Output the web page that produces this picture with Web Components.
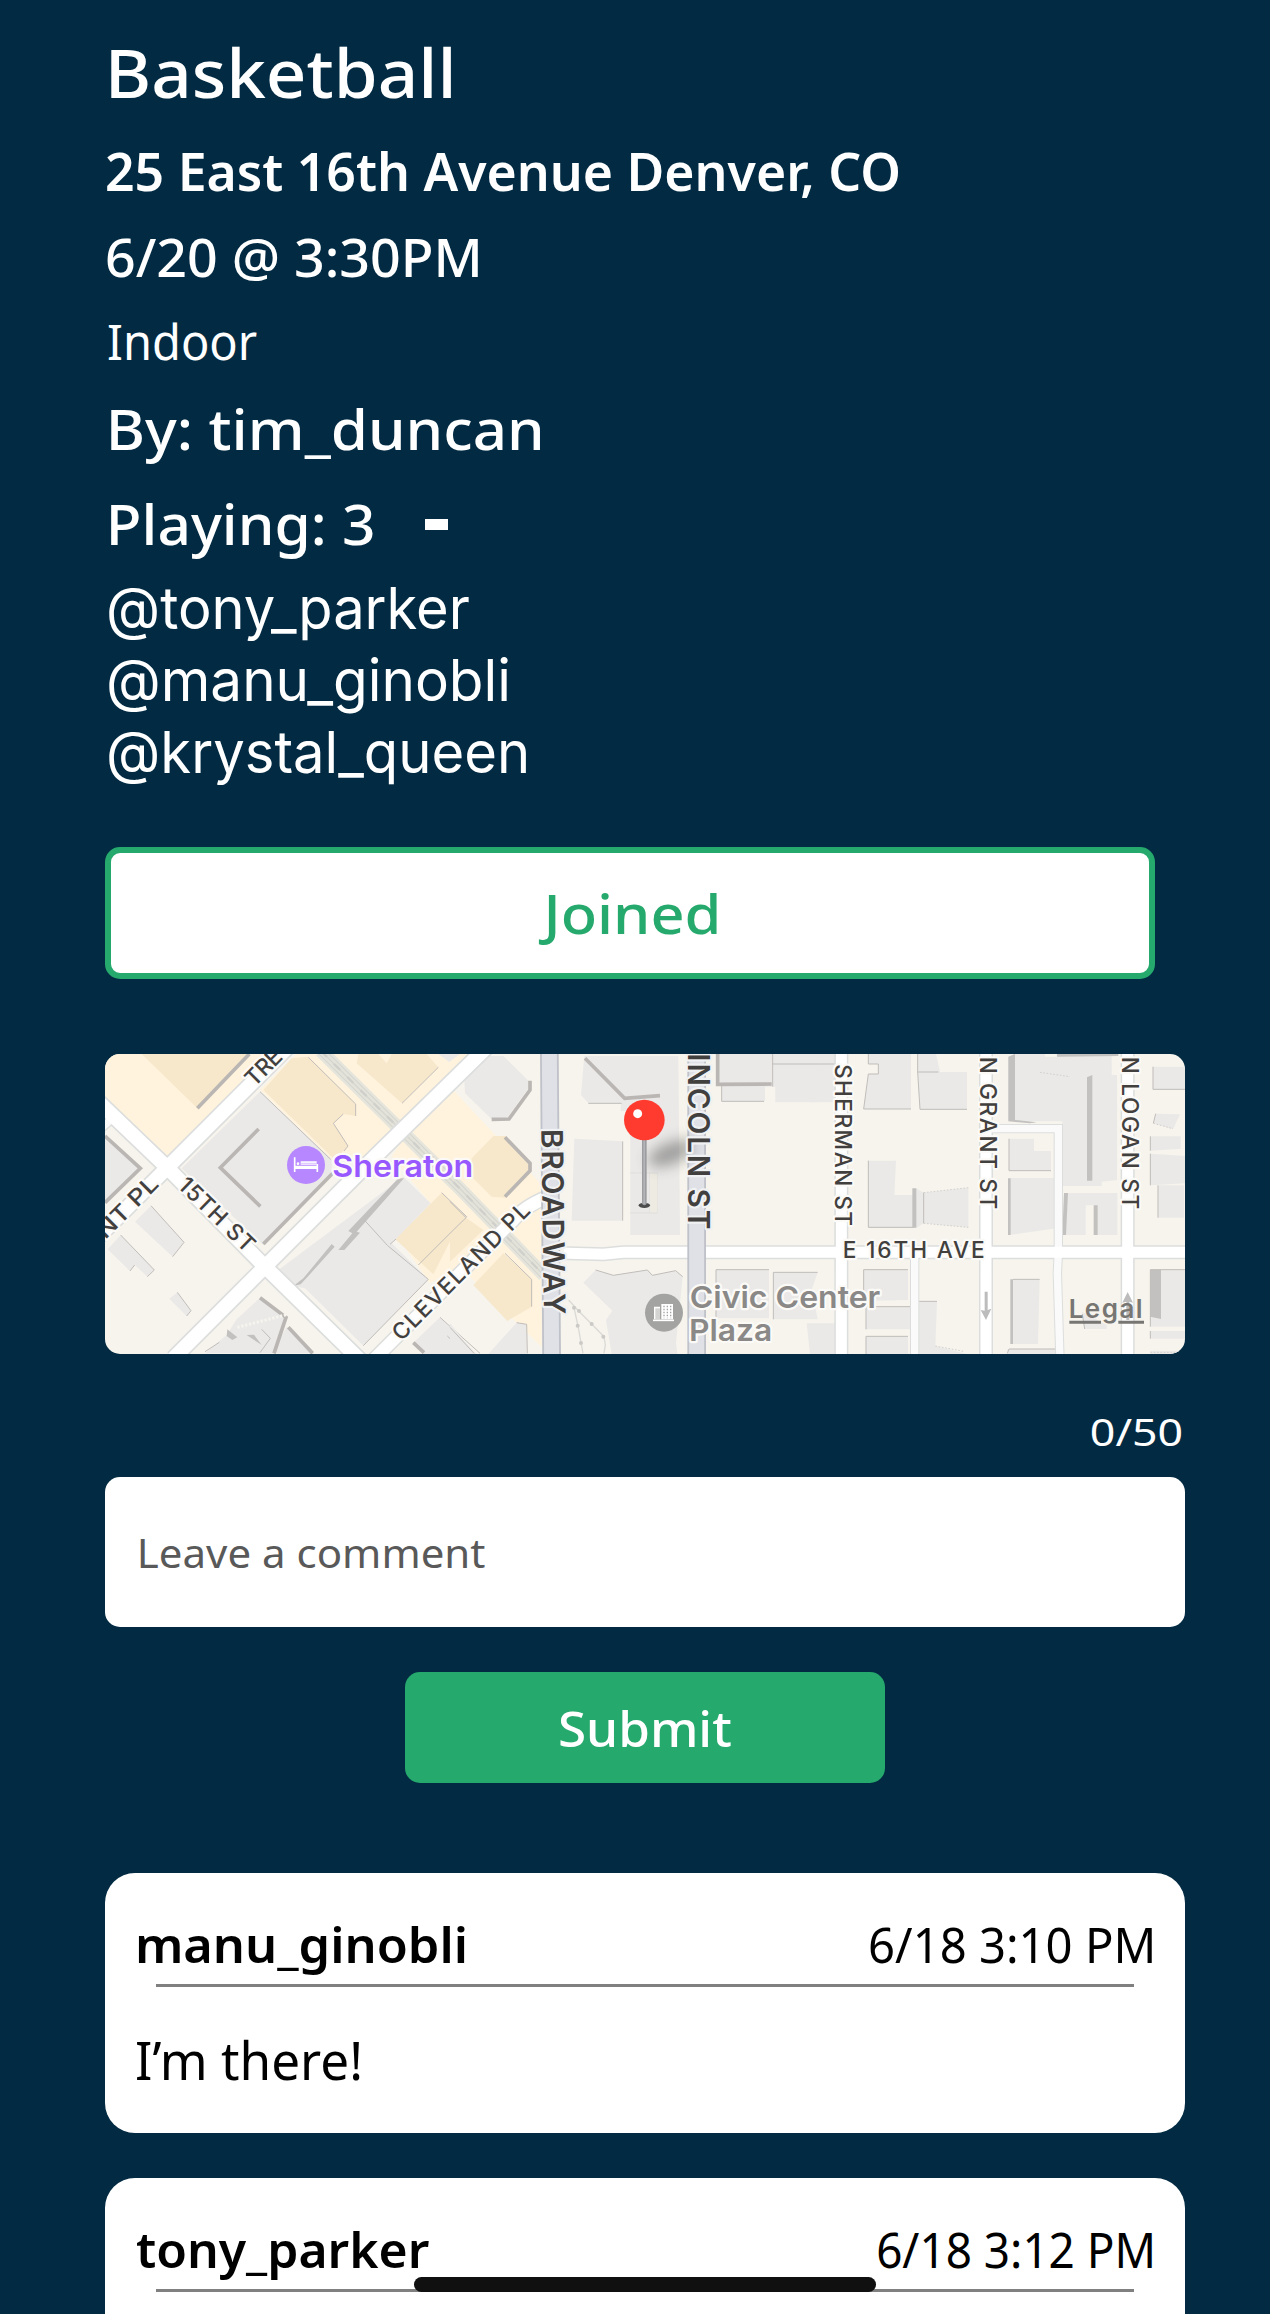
<!DOCTYPE html>
<html lang="en">
<head>
<meta charset="utf-8">
<title>Basketball</title>
<style>
  html, body { margin: 0; background: #022b43; }
  body { height: 2314px; overflow: hidden; }
</style>
</head>
<body>
<event-page></event-page>

<script>
const UI = '"Noto Sans", "Open Sans", sans-serif';
const SYS = 'Inter, "Liberation Sans", sans-serif';
const ctx = document.createElement('canvas').getContext('2d');

/* One line of text whose visible ink spans `w` px (moved by `dx`), with its baseline at `base`. */
class TypeLine extends HTMLElement {
  connectedCallback() {
    const n = k => parseFloat(this.getAttribute(k)) || 0;
    const size = n('size'), weight = this.getAttribute('weight') || 400;
    const family = this.getAttribute('face') === 'system' ? SYS : UI;
    const root = this.attachShadow({ mode: 'open' });
    ctx.font = `${weight} ${size}px ${family}`;
    const m = ctx.measureText(this.textContent.trim());
    const ink = m.actualBoundingBoxLeft + m.actualBoundingBoxRight;
    const k = n('w') / ink;
    const a = m.fontBoundingBoxAscent, d = m.fontBoundingBoxDescent;
    const top = n('base') - ((size - a - d) / 2 + a);
    root.innerHTML = `<style>
      :host { display: block; flex: none; width: ${n('w')}px; height: ${n('h')}px; }
      span { display: block; width: max-content; white-space: pre; font: ${weight} ${size}px/1 ${family};
        transform-origin: 0 0;
        transform: translate(${m.actualBoundingBoxLeft * k + n('dx')}px, ${top}px) scaleX(${k}); }
    </style><span><slot></slot></span>`;
  }
}

class EventHeader extends HTMLElement {
  connectedCallback() {
    this.attachShadow({ mode: 'open' }).innerHTML = `<style>
      :host { display: flex; flex-direction: column; padding-left: 3px; color: #fff; height: 847px; box-sizing: border-box; }
      .row { display: flex; gap: 55px; }
      .pull { margin-left: -1px; }
      i { width: 23px; height: 11px; margin-top: 54px; background: #fff; }
    </style>
    <type-line w="340" dx="3" h="130" base="98" size="68" weight="500">Basketball</type-line>
    <type-line class="pull" w="791" h="85" base="61" size="52" weight="600">25 East 16th Avenue Denver, CO</type-line>
    <type-line class="pull" w="371" h="90" base="62" size="52" weight="500">6/20 @ 3:30PM</type-line>
    <type-line w="149" h="85" base="55" size="49" weight="400">Indoor</type-line>
    <type-line w="430" dx="3" h="75" base="61" size="56.5" weight="500">By: tim_duncan</type-line>
    <div class="row">
      <type-line w="262" dx="3" h="107" base="81" size="56.5" weight="500">Playing: 3</type-line><i></i>
    </div>
    <type-line w="360" dx="1" h="72" base="56.7" size="58" face="system">@tony_parker</type-line>
    <type-line w="399" dx="1" h="72" base="56.7" size="58" face="system">@manu_ginobli</type-line>
    <type-line w="417" dx="1" h="72" base="56.7" size="58" face="system">@krystal_queen</type-line>`;
  }
}

class ActionButton extends HTMLElement {
  connectedCallback() {
    this.attachShadow({ mode: 'open' }).innerHTML = `<style>
      :host { display: flex; justify-content: center; box-sizing: border-box; border-radius: 15px;
        background: #26a96c; color: #fff; width: 480px; height: 111px; }
      :host([joined]) { width: 1050px; height: 132px; border: 6px solid #26a96c; background: #fff; color: #26a96c; }
    </style><slot></slot>`;
  }
}

class CommentField extends HTMLElement {
  connectedCallback() {
    this.attachShadow({ mode: 'open' }).innerHTML = `<style>
      :host { display: block; }
      .count { display: flex; justify-content: flex-end; padding-right: 3px; color: #fff; height: 123px; }
      .box { height: 150px; border-radius: 15px; background: #fff; color: #595959; padding-left: 34px; box-sizing: border-box; }
    </style>
    <div class="count"><type-line w="91" h="123" base="92" size="38.5" weight="400">0/50</type-line></div>
    <div class="box"><type-line w="345" dx="1" h="150" base="91" size="40" weight="400">Leave a comment</type-line></div>`;
  }
}

class CommentCard extends HTMLElement {
  connectedCallback() {
    this.attachShadow({ mode: 'open' }).innerHTML = `<style>
      :host { display: flex; flex-direction: column; height: 260px; border-radius: 30px; background: #fff; color: #000;
        padding: 0 33px 0 31.5px; box-sizing: border-box; }
      .top { display: flex; justify-content: space-between; height: 111px; }
      hr { flex: none; height: 3px; border: 0; margin: 0 18px 0 19.5px; background: #808080; }
    </style>
    <div class="top"><slot name="who"></slot><slot name="when"></slot></div><hr><slot></slot>`;
  }
}

class HomeBar extends HTMLElement {
  connectedCallback() {
    this.attachShadow({ mode: 'open' }).innerHTML = `<style>
      :host { position: absolute; left: 414px; top: 2277px; width: 462px; height: 15px; border-radius: 7.5px; background: #101010; }
    </style>`;
  }
}

class VenueMap extends HTMLElement {
  connectedCallback() {
    this.attachShadow({ mode: 'open' }).innerHTML = `<style>
      :host { display: block; width: 1080px; height: 300px; border-radius: 15px; overflow: hidden; background: #f6f4ec; }
      svg { display: block; }
      .zone { fill: #fff3dd; } .shop { fill: #f7e8cc; } .bld { fill: #eae9e8; }
      .edge { fill: none; stroke: #bab6b3; stroke-width: 11; }
      .thin { fill: none; stroke: #c0bdba; stroke-width: 3; }
      .solid { fill: #c3c1bf; }
      .case { fill: none; stroke: #dcdedd; } .road { fill: none; stroke: #fff; }
      text { font-family: ${SYS}; fill: #42403e; stroke: #fbfaf7; stroke-width: 13; stroke-linejoin: round; paint-order: stroke; }
      .st { font-size: 68px; font-weight: 450; }
      .major { font-size: 89px; font-weight: 600; stroke: #f0f1f2; }
      .poi { font-size: 91px; font-weight: 600; }
    </style>
    <svg width="1080" height="300" viewBox="45 42 3240 900">
      <defs><filter id="soft" x="-60%" y="-100%" width="220%" height="300%"><feGaussianBlur stdDeviation="20"/></filter></defs>
      <!-- commercial zones -->
      <path class="zone" d="M45 42H565L232 365L45 180ZM510 150L620 42H1150L840 345L730 365ZM955 270L1085 145L1355 435V920L1240 810L1110 680L1020 730L930 600L1020 490L905 350Z"/>
      <!-- western blocks -->
      <path class="shop" d="M155 42H480L322 205ZM605 55L655 50L797 192V228L760 222L730 250L774 318L735 360L520 150ZM805 42H865L890 70L905 42H1010L1045 82L936 190L800 70ZM1055 458L1130 530L1105 555L1030 703L915 597Z"/>
      <path class="bld" d="M510 155L725 358V400L520 615L275 385ZM45 290L153 385L45 490ZM183 497L282 607L248 650L135 545ZM92 585L193 690L172 710L135 675L120 693L53 628ZM262 757L303 812L290 828L238 776ZM940 410L1022 490L905 610L1015 718L820 917L645 745L610 738L565 690ZM440 838L510 773L590 830L560 940H345L410 885ZM590 860L668 940H548ZM970 908L1050 832L1160 942H1000ZM1045 42H1110L1078 66Z"/>
      <path class="edge" d="M478 42L322 205M506 267L391 383L511 499M45 288L151 385L45 488M728 400L520 612M510 773L588 832L552 940M595 862L668 940M970 908L1002 938"/>
      <path class="solid" d="M925 415L942 415L800 575L810 578L763 630L745 630L787 580L775 573ZM725 612L734 620L655 708L632 733L610 738L640 715ZM412 868L442 892L427 900L410 888ZM470 885L492 884L515 915Z"/>
      <path class="thin" d="M510 155L722 358M655 52L797 192V228M760 222L730 250L774 318L762 333M1045 82L936 190M183 497L282 607L248 650M92 585L193 690L172 710M120 693L134 675M262 757L303 812L290 828M823 540L893 617L1015 718L820 917M900 613L918 597M1055 458L1130 530L985 675M1050 832L1170 940M515 868L541 895L510 938M345 935L388 907M1072 888L1110 925"/>
      <path d="M442 862L590 824" stroke="#f6f4ec" stroke-width="9" stroke-dasharray="7 5" fill="none"/>
      <!-- central blocks -->
      <g transform="translate(1080 0)">
        <path class="bld" d="M62 62L110 48L160 48L235 122V145L172 232L125 238L45 160L43 115ZM403 48H685L690 585H541V213L512 213L513 190L415 190L393 165ZM373 296L518 304V542H365ZM803 42H1160V187H976V140H945V184H815V138H803ZM437 690L490 706L592 690L607 706L677 692L698 710L678 910L682 942H485L468 840L487 812L400 728ZM798 689H957V835H798ZM970 697H1103L1085 750L1103 838H970ZM1070 850H1192V942H1080ZM200 848L230 853V942H115ZM0 850L75 942H0Z"/>
        <path class="shop" d="M130 288H168L245 370V392L165 473L125 470L60 405L65 355ZM160 640L245 718V800L172 843L70 735ZM0 485L48 533L100 570L0 665Z"/>
        <path class="edge" d="M240 122V150L177 237L125 238M405 55L524 175L630 167M165 292L240 370V392L165 470M803 42V133L965 132"/>
        <path class="thin" d="M0 485L48 533L0 580M518 304V542M165 640L245 718V800M437 690L490 706L592 690L607 706L677 692L698 710M415 190H515M815 138V184H942M970 697V838M970 697H1103M798 689H957M798 689V835M968 42V72H1190M968 140V70M200 848L230 853L232 940M0 862L72 940"/>
        <path d="M541 399H622V519H541M600 399V519" fill="none" stroke="#dedcd8" stroke-width="2.5"/><path d="M600 401h22v116h-22z" fill="#eeece2"/>
        <path d="M356 780L385 812L425 852L462 890L466 915L462 940M372 803L384 858L393 908L399 940" fill="none" stroke="#dbdad6" stroke-width="4"/>
        <g fill="#cbcac7"><circle cx="372" cy="803" r="6"/><circle cx="387" cy="813" r="6"/><circle cx="425" cy="852" r="6"/><circle cx="383" cy="857" r="6"/><circle cx="460" cy="890" r="6"/><circle cx="393" cy="909" r="6"/></g>
      </g>
      <!-- eastern blocks -->
      <g transform="translate(2160 0)">
        <path class="bld" d="M0 42H28V187H0ZM175 42H303V207H161L175 102H205V72H175ZM323 42H378L390 96H471V208H330L323 96ZM175 362H258L253 465H310L318 445L341 458L475 443V562L341 550L320 563H175ZM595 50L615 42H705V50H740V42H905V105H921V420L875 425V438H757V244H595ZM597 296H672V333H723V392H597ZM597 414H740V565L597 585ZM762 459H922V585H852V496H827V585H757ZM1029 80H1140V148H1029ZM1037 221L1110 223L1089 268L1030 250ZM1021 289H1112V326L1021 332ZM1021 341L1125 348V430L1021 436ZM1044 436H1122V533H1044ZM161 689H294V780L161 782ZM168 800H311V868H168ZM168 889H294V942H168ZM323 784H381L376 918L470 942H323ZM602 718H689L684 912H602ZM592 927H745V942H592ZM1021 689H1140V860H1021ZM1021 873H1140V896H1021ZM1021 932H1140V942H1021ZM815 815L890 855V867H824Z"/>
        <path class="solid" d="M595 50L615 42V240L680 247L660 250L595 244ZM741 42H925V48L741 50ZM831 112L847 105V422H831ZM307 445H319V563H307ZM594 415H602V585H594ZM762 459H774L768 585H757ZM851 496H863V585H851ZM601 718H609V912H601ZM1021 689H1053V837L1021 830Z"/>
        <path class="thin" d="M0 72H28M175 42V72H205V102H175L161 207H303M323 42V96L330 208H471M323 96H385M175 362V562H310M341 458V550M597 296V392H723M1029 80V148H1140M1037 221L1030 250M1021 289V332M1021 341V436M1044 436V533M161 782V689H294M168 868V800H311M168 942V889H294M323 942V784H381M609 718H689M592 940L597 927H740M1021 689H1140M1021 860V689M1021 873V896M817 822L824 867"/>
        <path d="M341 458L475 443M341 550L475 562M690 97L780 110M376 918L460 934M1021 937H1120M1030 250L1089 266" fill="none" stroke="#d2d0cd" stroke-width="3" stroke-dasharray="5 5"/>
      </g>
      <!-- light rail -->
      <g fill="none"><path d="M692 32L1110 446L1362 706" stroke="#e6e5dc" stroke-width="40"/><path d="M692 32L1110 446L1362 706" stroke="#d4d5cf" stroke-width="25"/><path d="M692 32L1110 446L1362 706" stroke="#e4e3da" stroke-width="19"/><path d="M692 32L1110 446L1362 706" stroke="#d6d6d0" stroke-width="4"/><path d="M692 32L1110 446L1362 706" stroke="#cfd0cb" stroke-width="7" stroke-dasharray="26 30"/></g>
      <!-- streets -->
      <g class="case">
        <path stroke-width="52" d="M25 185L232 383L525 680L815 965M232 383L610 5M232 383L20 595M525 680L860 345L1190 22M525 680L250 955"/>
        <path stroke-width="46" d="M845 965L1270 540Q1300 500 1375 470"/>
        <path stroke-width="42" d="M1420 640H1435L1540 643L1600 637H3300M2254 30V960M2688 30V960M3113 30V960"/>
        <path stroke-width="28" d="M2700 266H2905V640L2902 700L2910 960M2474 640V960"/>
        <path stroke-width="30" d="M30 268L75 228"/>
      </g>
      <g class="road">
        <path stroke-width="22" stroke="#fafafa" d="M2700 266H2905V640L2902 700L2910 960M2474 640V960M30 268L75 228"/>
        <path stroke-width="42" d="M25 185L232 383L525 680L815 965M232 383L610 5M232 383L20 595M525 680L860 345L1190 22M525 680L250 955"/>
        <path stroke-width="37" d="M845 965L1270 540Q1300 500 1375 470"/>
        <path stroke-width="33" d="M1420 640H1435L1540 643L1600 637H3300M2254 30V960M2688 30V960M3113 30V960"/>
      </g>
      <path d="M1378 30L1385 960M1820 30V960" fill="none" stroke="#c0c2c9" stroke-width="56"/>
      <path d="M1378 30L1385 960M1820 30V960" fill="none" stroke="#e0e1e7" stroke-width="45"/>
      <!-- one-way arrows -->
      <g fill="#bcbcbc"><path d="M2684 755H2693V810L2704 806L2688 840L2672 810L2684 812ZM3109 840H3118V785L3129 788L3113 756L3097 788L3109 785Z"/></g>
      <!-- pin shadow -->
      <ellipse cx="1742" cy="340" rx="72" ry="32" fill="#444" opacity=".45" filter="url(#soft)" transform="rotate(-22 1742 340)"/>
      <!-- street names -->
      <g class="st">
        <text transform="translate(493 143) rotate(-45)" textLength="126">TRE</text>
        <text transform="translate(46 600) rotate(-45)" textLength="232" lengthAdjust="spacingAndGlyphs">NT PL</text>
        <text transform="translate(260 440) rotate(44)" textLength="290">15TH ST</text>
        <text transform="translate(934 906) rotate(-45)" textLength="552">CLEVELAND PL</text>
        <text transform="translate(2235 72) rotate(90)" textLength="486">SHERMAN ST</text>
        <text transform="translate(2670 50) rotate(90)" textLength="458">N GRANT ST</text>
        <text transform="translate(3095 50) rotate(90)" textLength="458">N LOGAN ST</text>
        <text x="2258" y="653" textLength="426">E 16TH AVE</text>
      </g>
      <text class="major" transform="translate(1354 267) rotate(89.2)" textLength="556">BROADWAY</text>
      <text class="major" transform="translate(1794 40) rotate(90)" textLength="528">INCOLN ST</text>
      <!-- places -->
      <circle cx="648" cy="375" r="57" fill="#b787ff"/>
      <g stroke="#fff" fill="none"><path d="M614 352V396M682 372V396" stroke-width="5"/><path d="M614 382H684" stroke-width="10"/><path d="M632 369H680" stroke-width="11"/><path d="M632 370H680" stroke="#c9a5ff" stroke-width="2"/><circle cx="624" cy="371" r="4" fill="#fff" stroke="none"/></g>
      <text class="poi" x="727" y="410" textLength="423" lengthAdjust="spacingAndGlyphs" style="fill:#9858ff">Sheraton</text>
      <circle cx="1722" cy="818" r="57" fill="#a3a3a1"/>
      <path d="M1714 792H1749V838H1714ZM1692 800H1710V838H1692Z" fill="#fff"/><path d="M1696 805H1710V837H1696Z" fill="#d4d4d2"/><path d="M1689 841H1752" stroke="#fff" stroke-width="5"/><path d="M1722 797V835M1732 797V835M1742 797V835" stroke="#a3a3a1" stroke-width="4" stroke-dasharray="5 4"/>
      <text class="poi" x="1799" y="805" textLength="572" lengthAdjust="spacingAndGlyphs" style="fill:#8a8987">Civic Center</text>
      <text class="poi" x="1797" y="902" textLength="250" lengthAdjust="spacingAndGlyphs" style="fill:#8a8987">Plaza</text>
      <text x="2936" y="833" textLength="222" style="font-size:78px;font-weight:600;fill:#777673;stroke:none">Legal</text>
      <path d="M2938 847H3033M3085 847H3162" stroke="#777673" stroke-width="9"/>
      <!-- pin -->
      <ellipse cx="1663" cy="496" rx="17" ry="8" fill="#4b4b4b"/>
      <path d="M1656 298H1670V491Q1663 500 1656 491Z" fill="#9b9da0"/><path d="M1660 298H1665V492H1660Z" fill="#b2b4b7"/>
      <circle cx="1663" cy="240" r="61" fill="#ff3b30"/><circle cx="1643" cy="221" r="13.5" fill="#fff"/>
    </svg>`;
  }
}

class EventPage extends HTMLElement {
  connectedCallback() {
    this.attachShadow({ mode: 'open' }).innerHTML = `<style>
      :host { display: flex; flex-direction: column; width: 1080px; padding-left: 105px; height: 2314px; overflow: hidden; }
      event-header, action-button, venue-map, comment-field, comment-card { flex: none; }
      venue-map { margin-top: 75px; }
      .submit { align-self: center; margin: 45px 0 90px; }
      comment-card + comment-card { margin-top: 45px; }
    </style>
    <event-header></event-header>
    <action-button joined><type-line w="179" dx="-3" h="120" base="81" size="55" weight="500">Joined</type-line></action-button>
    <venue-map></venue-map>
    <comment-field></comment-field>
    <action-button class="submit"><type-line w="171" h="111" base="75" size="49" weight="500">Submit</type-line></action-button>
    <comment-card>
      <type-line slot="who" w="327" dx="1" h="111" base="90" size="49" weight="600">manu_ginobli</type-line>
      <type-line slot="when" w="282" h="111" base="90" size="49">6/18 3:10 PM</type-line>
      <type-line w="223" h="140" base="93" size="52">I’m there!</type-line>
    </comment-card>
    <comment-card>
      <type-line slot="who" w="293" dx="-1" h="111" base="90" size="49" weight="600">tony_parker</type-line>
      <type-line slot="when" w="274" h="111" base="90" size="49">6/18 3:12 PM</type-line>
    </comment-card>
    <home-bar></home-bar>`;
  }
}

customElements.define('type-line', TypeLine);
customElements.define('event-header', EventHeader);
customElements.define('action-button', ActionButton);
customElements.define('comment-field', CommentField);
customElements.define('comment-card', CommentCard);
customElements.define('home-bar', HomeBar);
customElements.define('venue-map', VenueMap);
customElements.define('event-page', EventPage);
</script>
</body>
</html>
